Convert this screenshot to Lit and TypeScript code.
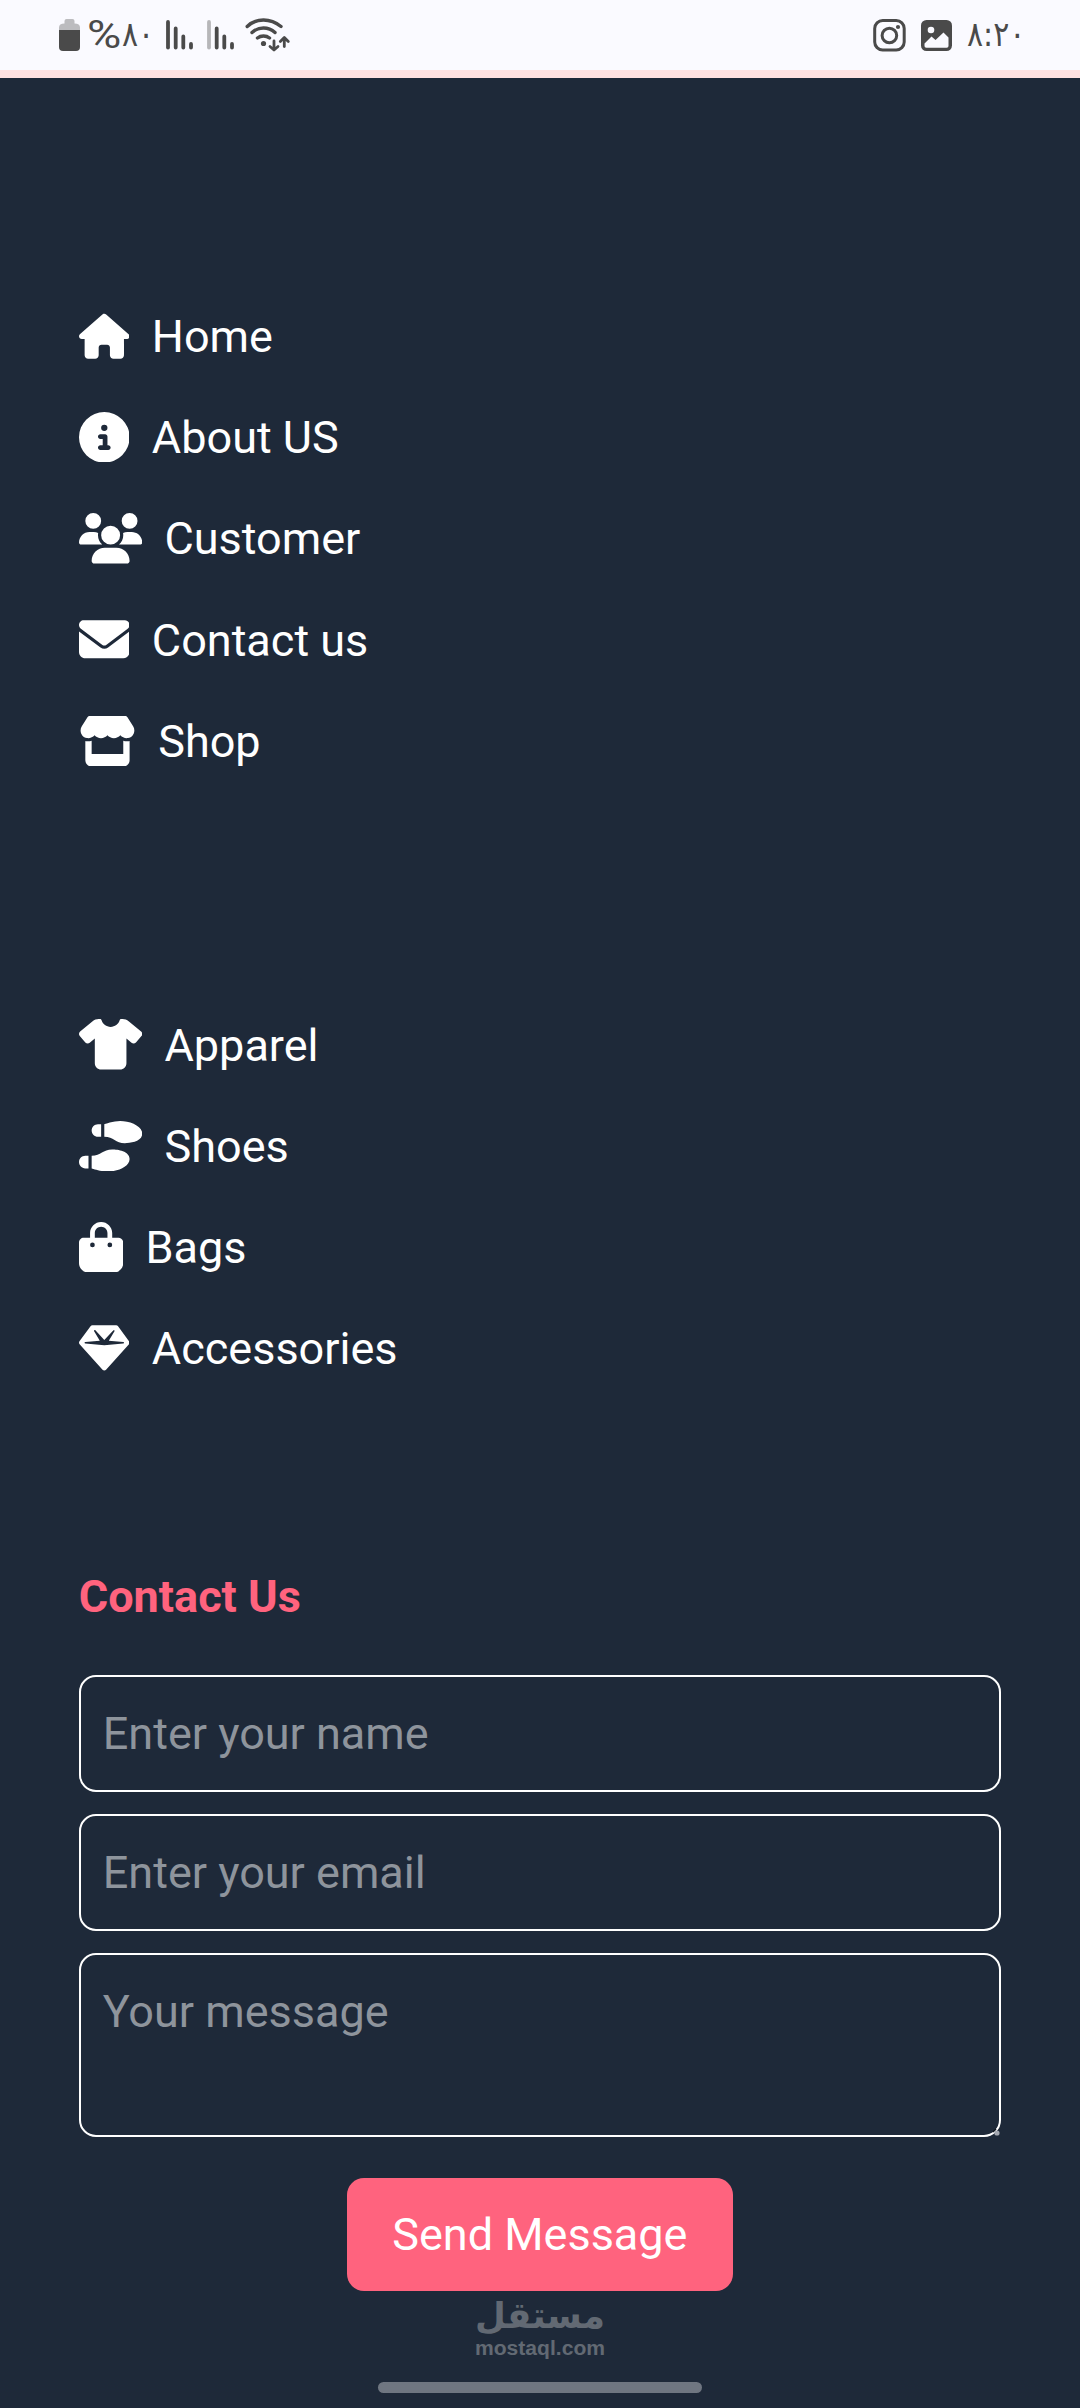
import { LitElement, html, svg, css } from "lit";
import { customElement, property } from "lit/decorators.js";

interface Glyph {
  width: number;
  box: number;
  path: string;
}

// box: width of the viewBox; width: advance of the icon in units of 1/512 of its height
const glyphs: Record<string, Glyph> = {
  home: {
    width: 512,
    box: 576,
    path: "M575.8 255.5c0 18-15 32.1-32 32.1h-32l.7 160.2c0 2.7-.2 5.4-.5 8.1V472c0 22.1-17.9 40-40 40H456c-1.1 0-2.2 0-3.3-.1c-1.4 .1-2.8 .1-4.2 .1H416 392c-22.1 0-40-17.9-40-40V448 384c0-17.7-14.3-32-32-32H256c-17.7 0-32 14.3-32 32v64 24c0 22.1-17.9 40-40 40H160 128.1c-1.5 0-3-.1-4.5-.2c-1.2 .1-2.4 .2-3.6 .2H104c-22.1 0-40-17.9-40-40V360c0-.9 0-1.9 .1-2.8V287.6H32c-18 0-32-14-32-32.1c0-9 3-17 10-24L266.4 8c7-7 15-8 22-8s15 2 21 7L564.8 231.5c8 7 12 15 11 24z",
  },
  info: {
    width: 512,
    box: 512,
    path: "M256 512A256 256 0 1 0 256 0a256 256 0 1 0 0 512zM216 336h24V272H216c-13.3 0-24-10.7-24-24s10.7-24 24-24h48c13.3 0 24 10.7 24 24v88h8c13.3 0 24 10.7 24 24s-10.7 24-24 24H216c-13.3 0-24-10.7-24-24s10.7-24 24-24zm40-208a32 32 0 1 1 0 64 32 32 0 1 1 0-64z",
  },
  users: {
    width: 640,
    box: 640,
    path: "M144 0a80 80 0 1 1 0 160A80 80 0 1 1 144 0zM512 0a80 80 0 1 1 0 160A80 80 0 1 1 512 0zM0 298.7C0 239.8 47.8 192 106.7 192h42.7c15.9 0 31 3.5 44.6 9.7c-1.3 7.2-1.9 14.7-1.9 22.3c0 38.2 16.8 72.5 43.3 96c-.2 0-.4 0-.7 0H21.3C9.6 320 0 310.4 0 298.7zM405.3 320c-.2 0-.4 0-.7 0c26.6-23.5 43.3-57.8 43.3-96c0-7.6-.7-15-1.9-22.3c13.6-6.3 28.7-9.7 44.6-9.7h42.7C592.2 192 640 239.8 640 298.7c0 11.8-9.6 21.3-21.3 21.3H405.3zM224 224a96 96 0 1 1 192 0 96 96 0 1 1 -192 0zM128 485.3C128 411.7 187.7 352 261.3 352H378.7C452.3 352 512 411.7 512 485.3c0 14.7-11.9 26.7-26.7 26.7H154.7c-14.7 0-26.7-11.9-26.7-26.7z",
  },
  envelope: {
    width: 512,
    box: 512,
    path: "M48 64C21.5 64 0 85.5 0 112c0 15.1 7.1 29.3 19.2 38.4L236.8 313.6c11.4 8.5 27 8.5 38.4 0L492.8 150.4c12.1-9.1 19.2-23.3 19.2-38.4c0-26.5-21.5-48-48-48H48zM0 176V384c0 35.3 28.7 64 64 64H448c35.3 0 64-28.7 64-64V176L294.4 339.2c-22.8 17.1-54 17.1-76.8 0L0 176z",
  },
  store: {
    width: 576,
    box: 576,
    path: "M547.6 103.8L490.3 13.1C485.2 5 476.1 0 466.4 0H109.6C99.9 0 90.8 5 85.7 13.1L28.3 103.8c-29.6 46.8-3.4 111.9 51.9 119.4c4 .5 8.1 .8 12.1 .8c26.1 0 49.3-11.4 65.2-29c15.9 17.6 39.1 29 65.2 29c26.1 0 49.3-11.4 65.2-29c15.9 17.6 39.1 29 65.2 29c26.2 0 49.3-11.4 65.2-29c16 17.6 39.1 29 65.2 29c4.1 0 8.1-.3 12.1-.8c55.5-7.4 81.8-72.5 52.1-119.4zM499.7 254.9l-.1 0c-5.3 .7-10.7 1.1-16.2 1.1c-12.4 0-24.3-1.9-35.4-5.3V384H128V250.6c-11.2 3.5-23.2 5.4-35.6 5.4c-5.5 0-11-.4-16.3-1.1l-.1 0c-4.1-.6-8.1-1.3-12-2.3V384v64c0 35.3 28.7 64 64 64H448c35.3 0 64-28.7 64-64V384 252.6c-4 1-8 1.8-12.3 2.3z",
  },
  shirt: {
    width: 640,
    box: 640,
    path: "M211.8 0c7.8 0 14.3 5.7 16.7 13.2C240.8 51.9 277.1 80 320 80s79.2-28.1 91.5-66.8C413.9 5.7 420.4 0 428.2 0h12.6c22.5 0 44.2 7.9 61.5 22.3L628.5 127.4c6.6 5.5 10.7 13.5 11.4 22.1s-2.1 17.1-7.8 23.6l-56 64c-11.4 13.1-31.2 14.6-44.6 3.5L480 197.7V448c0 35.3-28.7 64-64 64H224c-35.3 0-64-28.7-64-64V197.7l-51.5 42.9c-13.3 11.1-33.1 9.6-44.6-3.5l-56-64c-5.7-6.5-8.5-15-7.8-23.6s4.8-16.6 11.4-22.1L137.7 22.3C155 7.9 176.7 0 199.2 0h12.6z",
  },
  shoes: {
    width: 640,
    box: 640,
    path: "M416 0C352.3 0 256 32 256 32V160c48 0 76 16 104 32s56 32 104 32c56.4 0 176-16 176-96S512 0 416 0zM128 96c0 35.3 28.7 64 64 64h32V32H192c-35.3 0-64 28.7-64 64zM288 512c96 0 224-48 224-128s-119.6-96-176-96c-48 0-76 16-104 32s-56 32-104 32V480s96.3 32 160 32zM0 416c0 35.3 28.7 64 64 64H96V352H64c-35.3 0-64 28.7-64 64z",
  },
  bag: {
    width: 448,
    box: 448,
    path: "M160 112c0-35.3 28.7-64 64-64s64 28.7 64 64v48H160V112zm-48 48H48c-26.5 0-48 21.5-48 48V416c0 53 43 96 96 96H352c53 0 96-43 96-96V208c0-26.5-21.5-48-48-48H336V112C336 50.1 285.9 0 224 0S112 50.1 112 112v48zm24 48a24 24 0 1 1 0 48 24 24 0 1 1 0-48zm152 24a24 24 0 1 1 48 0 24 24 0 1 1 -48 0z",
  },
  gem: {
    width: 512,
    box: 512,
    path: "M116.7 33.8c4.5-6.1 11.7-9.8 19.3-9.8H376c7.6 0 14.8 3.6 19.3 9.8l112 152c6.8 9.2 6.1 21.9-1.5 30.4l-232 256c-4.5 5-11 7.9-17.8 7.9s-13.2-2.9-17.8-7.9l-232-256c-7.7-8.5-8.3-21.2-1.5-30.4l112-152zm38.5 39.8c-3.3 2.5-4.2 7-2.1 10.5l57.4 95.6L63.3 192c-4.1 .3-7.3 3.8-7.3 8s3.2 7.6 7.3 8l192 16c.4 0 .9 0 1.3 0l192-16c4.1-.3 7.3-3.8 7.3-8s-3.2-7.6-7.3-8L301.5 179.8l57.4-95.6c2.1-3.5 1.2-8.1-2.1-10.5s-7.9-2-10.7 1L256 172.2 165.9 74.6c-2.8-3-7.4-3.4-10.7-1z",
  },
};

@customElement("nav-list")
class NavList extends LitElement {
  @property({ attribute: false }) items: [string, string][] = [];

  static styles = css`
    :host {
      display: block;
    }
    ul {
      list-style: none;
      margin: 0;
      padding: 0;
    }
    .row {
      display: flex;
      align-items: center;
      gap: 22.5px;
      height: 101.25px;
      color: #fff;
      font-size: 45px;
      line-height: 67.5px;
    }
    .icon {
      display: block;
      flex: none;
      height: 50.6px;
      margin-bottom: 1.5px;
      fill: currentColor;
    }
  `;

  render() {
    return html`<ul>
      ${this.items.map(([icon, label]) => {
        const g = glyphs[icon];
        return html`<li class="row">
          <svg class="icon" width=${(g.width / 512) * 50.6} height="50.6" viewBox="0 0 ${g.box} 512" aria-hidden="true">
            <path d=${g.path}></path>
          </svg>
          <span>${label}</span>
        </li>`;
      })}
    </ul>`;
  }
}

@customElement("status-bar")
class StatusBar extends LitElement {
  static styles = css`
    :host {
      display: flex;
      justify-content: space-between;
      box-sizing: border-box;
      height: 78px;
      padding: 15px 62px 0 59px;
      background: #fafaff;
      border-bottom: 8px solid #ffe2e2;
      color: #4a4a4a;
    }
    .group {
      display: flex;
      align-items: center;
      height: 40px;
    }
    svg {
      display: block;
      flex: none;
    }
    .percent {
      width: 35px;
      margin-left: 7px;
      font: 39px/40px Roboto, sans-serif;
      transform: scaleX(1.2);
      transform-origin: 0 50%;
    }
    .digits {
      width: 31px;
      margin-bottom: 3px;
      font: 30px/40px "DejaVu Sans", sans-serif;
      letter-spacing: -1.5px;
      white-space: nowrap;
      transform: scaleY(1.15);
    }
    .time {
      width: 51px;
    }
    .bars {
      margin-left: 13px;
    }
    .wifi {
      margin-left: 10px;
    }
    .gallery {
      margin: 0 15px 0 15px;
    }
  `;

  private bars(first: number) {
    return html`<svg class="bars" width="28" height="40" viewBox="0 0 28 40">
      <g stroke="#4a4a4a" stroke-width="3.8" stroke-linecap="round">
        ${svg`<path d="M2 7v25.5" opacity=${first}></path>`}
        <path d="M9.7 13.5v19M17.3 21.5v11M25 29v3.5"></path>
      </g>
    </svg>`;
  }

  render() {
    return html`
      <div class="group">
        <svg width="21" height="40" viewBox="0 0 21 40">
          <path d="M5.5 8.5V6q0-2 2-2h6q2 0 2 2v2.500q5.500 0 5.500 4V16H0v-3.500q0-4 5.500-4z" fill="#bcbcbf" />
          <path d="M0 15h21v17q0 4-4 4H4q-4 0-4-4z" fill="#4a4a4a" />
        </svg>
        <span class="percent">%</span>
        <span class="digits">٨٠</span>
        ${this.bars(1)} ${this.bars(0.38)}
        <svg class="wifi" width="46" height="40" viewBox="0 0 46 40" fill="none" stroke="#4a4a4a" stroke-width="3.4" stroke-linecap="round">
          <path d="M2.200 11.500Q9 5 18.500 5T36 11.500M7 17.500q5-4.500 11.500-4.500t11.500 4.500M12.500 23q2.500-2 6-2t6 2" />
          <circle cx="18.500" cy="28.500" r="2.600" fill="#4a4a4a" stroke="none" />
          <path d="M29 26v8.500M25 31.500l4 3.500 4-3.500M39.300 31.500V23M35.300 26.500l4-4 4 4" stroke-width="2.800" stroke-linejoin="round" />
        </svg>
      </div>
      <div class="group">
        <svg width="33" height="40" viewBox="0 0 33 40" fill="none" stroke="#4a4a4a" stroke-width="3">
          <rect x="1.700" y="5.500" width="29.500" height="29.500" rx="8" />
          <circle cx="16.400" cy="20.500" r="7.300" />
          <circle cx="25" cy="12" r="2.100" fill="#4a4a4a" stroke="none" />
        </svg>
        <svg class="gallery" width="31" height="40" viewBox="0 0 31 40">
          <rect y="5" width="31" height="31" rx="5.500" fill="#4a4a4a" />
          <circle cx="10" cy="15" r="3.300" fill="#fafaff" />
          <path d="M3.500 28.500l7-7 4 3.500 8-7.500 5 5V31q0 1.800-1.800 1.800H5.300Q3.500 32.800 3.500 31z" fill="#fafaff" />
        </svg>
        <span class="digits time">٨:٢٠</span>
      </div>
    `;
  }
}

@customElement("app-root")
class AppRoot extends LitElement {
  static styles = css`
    :host {
      display: flex;
      flex-direction: column;
      box-sizing: border-box;
      width: 1080px;
      height: 2408px;
      overflow: hidden;
      background: #1e2939;
      font-family: Roboto, sans-serif;
      font-size: 45px;
    }
    main {
      display: flex;
      flex-direction: column;
      padding: 208px 79px 0 78.75px;
    }
    .second {
      margin-top: 202.500px;
    }
    h2 {
      margin: 163px 0 45px;
      color: #ff637e;
      font-size: 45px;
      font-weight: 700;
      line-height: 67.500px;
    }
    form {
      display: flex;
      flex-direction: column;
      gap: 22px;
    }
    .field {
      display: block;
      box-sizing: border-box;
      width: 922px;
      height: 117px;
      margin: 0;
      padding: 22px;
      border: 2px solid #fff;
      border-radius: 17px;
      outline: none;
      background: transparent;
      color: #fff;
      font: 45px/67.500px Roboto, sans-serif;
      resize: none;
    }
    .field::placeholder {
      color: #8e949c;
      opacity: 1;
    }
    .area {
      position: relative;
      height: 184px;
    }
    .area .field {
      height: 184px;
      padding-top: 23px;
      overflow: hidden;
    }
    .grip {
      position: absolute;
      right: 1px;
      bottom: 1px;
    }
    .send {
      align-self: center;
      width: 386px;
      height: 113px;
      margin-top: 19px;
      padding: 0;
      border: 0;
      border-radius: 17px;
      background: #ff637e;
      color: #fff;
      font: 45px/67.500px Roboto, sans-serif;
    }
    footer {
      display: flex;
      flex-direction: column;
      align-items: center;
      gap: 19px;
      margin-top: 3px;
    }
    .mark {
      display: block;
      fill: #626973;
    }
    .handle {
      width: 324px;
      height: 11px;
      border-radius: 6px;
      background: #6f7681;
    }
  `;

  private pages: [string, string][] = [
    ["home", "Home"],
    ["info", "About US"],
    ["users", "Customer"],
    ["envelope", "Contact us"],
    ["store", "Shop"],
  ];

  private categories: [string, string][] = [
    ["shirt", "Apparel"],
    ["shoes", "Shoes"],
    ["bag", "Bags"],
    ["gem", "Accessories"],
  ];

  render() {
    return html`
      <status-bar></status-bar>
      <main>
        <nav-list .items=${this.pages}></nav-list>
        <nav-list class="second" .items=${this.categories}></nav-list>
        <h2>Contact Us</h2>
        <form>
          <input class="field" placeholder="Enter your name" />
          <input class="field" placeholder="Enter your email" />
          <div class="area">
            <textarea class="field" placeholder="Your message"></textarea>
            <svg class="grip" width="8" height="8" viewBox="0 0 8 8">
              <path d="M1 4l3-3" stroke="#10161f" stroke-width="1.500" />
              <circle cx="5" cy="5" r="2.600" fill="#a3a7b0" />
            </svg>
          </div>
          <button class="send" type="button">Send Message</button>
        </form>
      </main>
      <footer>
        <svg class="mark" width="150" height="69" viewBox="0 0 150 69">
          <text x="75" y="34" text-anchor="middle" direction="rtl" textLength="130" lengthAdjust="spacingAndGlyphs" font-family="DejaVu Sans" font-weight="700" font-size="36">مستقل</text>
          <text x="10" y="61" textLength="130" lengthAdjust="spacingAndGlyphs" font-family="Liberation Sans" font-weight="700" font-size="20">mostaql.com</text>
        </svg>
        <div class="handle"></div>
      </footer>
    `;
  }
}
